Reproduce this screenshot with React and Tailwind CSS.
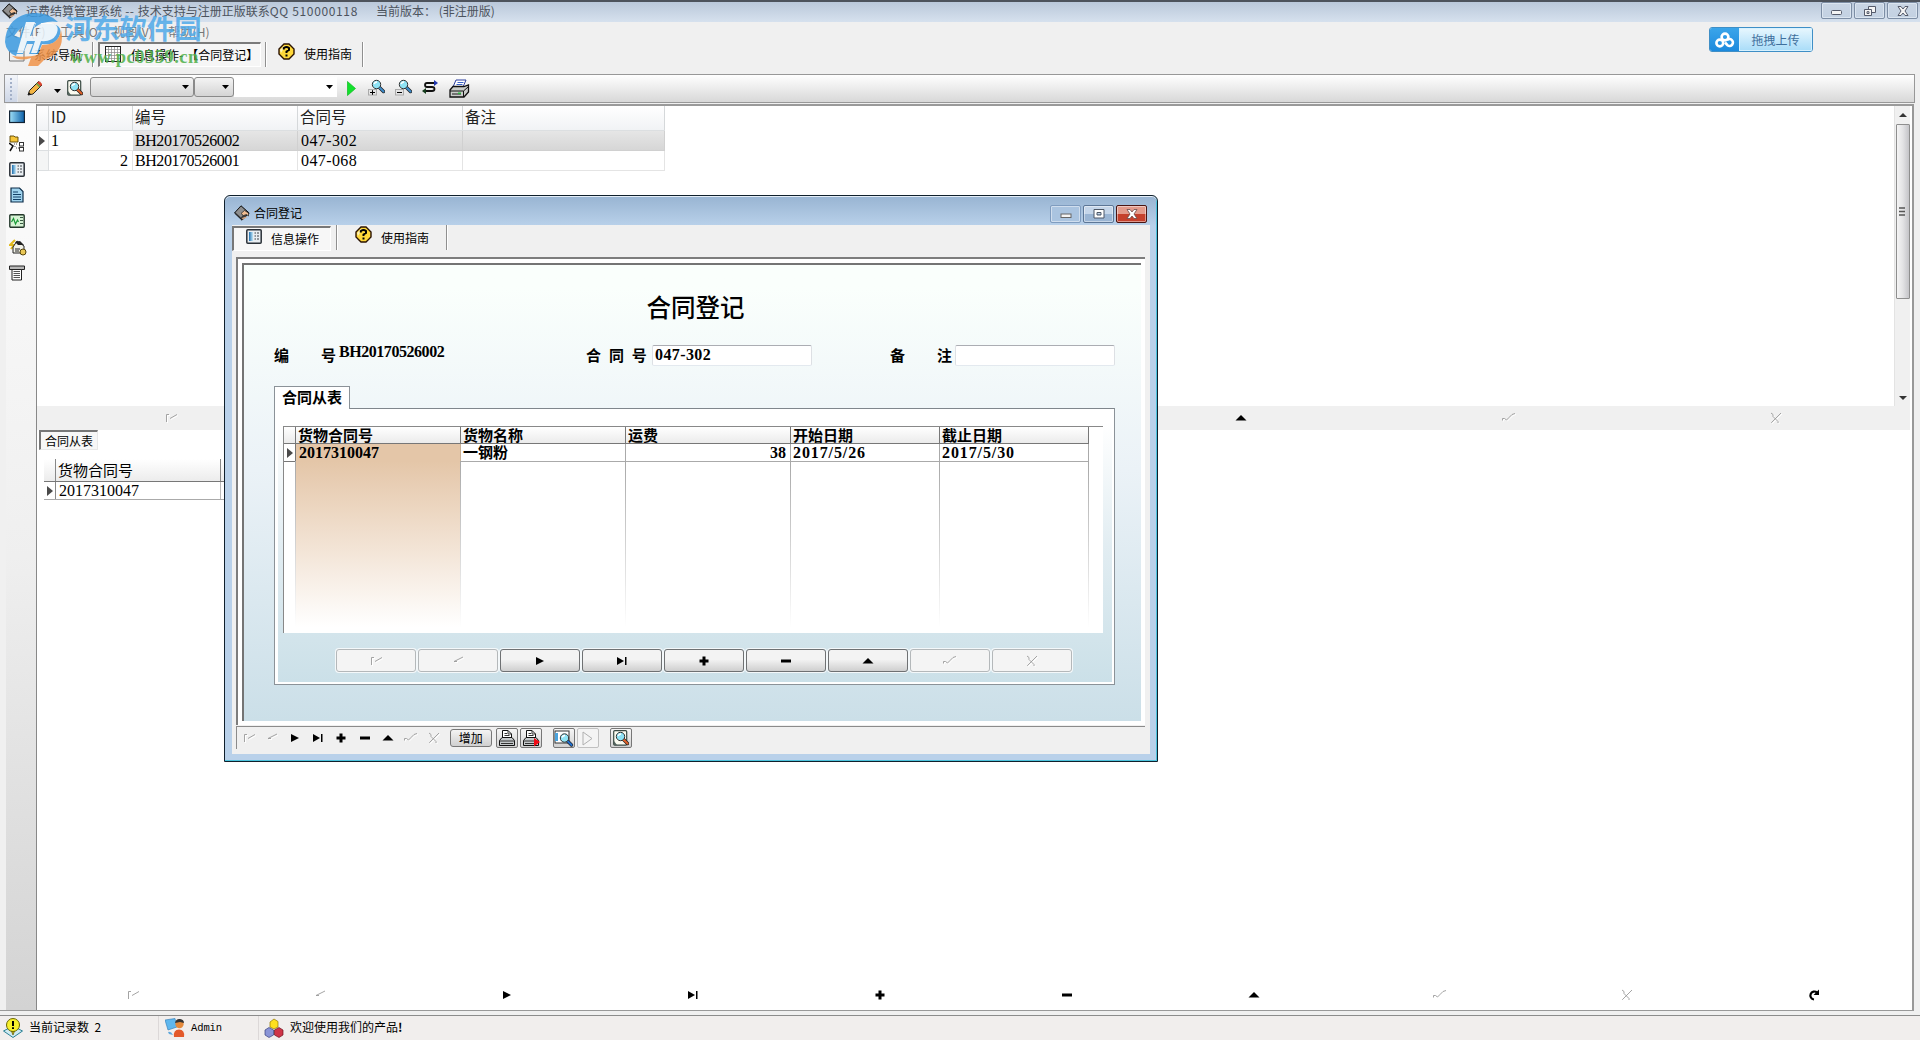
import React from "react";

const sans = "font-['Noto_Sans_CJK_SC',sans-serif]";
const serif = "font-['Liberation_Serif','Noto_Sans_CJK_SC',serif]";

function Nav({ kind, off }) {
  const c = off ? "#9a9a9a" : "#000";
  const disabled = {
    first: "M3.5 12V4.5H6M7 8.5L14 4.5",
    prev: "M4 8.5L13 4M4 8.5H7",
    check: "M1.5 10.5V8.5H3.5L5.5 10L8 7.5L11 4.500L14 3.5",
    cancel: "M3 3L5 4.500V6.500L10 11.500V13M13 3L8 8L3.500 12.500V13",
  };
  return (
    <svg width="16" height="16" viewBox="0 0 16 16" className="shrink-0">
      {disabled[kind] && (
        <>
          <path d={disabled[kind]} transform="translate(1 1)" fill="none" stroke="#fff" strokeWidth="1" />
          <path d={disabled[kind]} fill="none" stroke={c} strokeWidth="0.9" />
        </>
      )}
      {kind === "next" && <path d="M4 4L12 8L4 12Z" fill={c} />}
      {kind === "last" && <path d="M3 4L10 8L3 12ZM11 4H12.500V12H11Z" fill={c} />}
      {kind === "plus" && <path d="M6.5 3.5H9.5V6.5H12.5V9.5H9.5V12.5H6.5V9.5H3.5V6.5H6.5Z" fill={c} />}
      {kind === "minus" && <path d="M3 6.5H13V9.5H3Z" fill={c} />}
      {kind === "up" && <path d="M8 5L13.5 10.5H2.5Z" fill={c} />}
      {kind === "refresh" && (
        <>
          <path d="M11 5.5A4 4 0 1 0 8 12.500" fill="none" stroke={c} strokeWidth="2.200" />
          <path d="M7.500 8H13V2.5Z" fill={c} />
        </>
      )}
    </svg>
  );
}

function AppIcon() {
  return (
    <svg width="16" height="16" viewBox="0 0 16 16" className="shrink-0">
      <path d="M0.500 8L7 0.8L15.200 8L8 15.2Z" fill="#3c3c3c" stroke="#111" />
      <path d="M1.500 7.500L7 1.500L12 6L7 12.500Z" fill="#8f8f8f" />
      <path d="M7 8.500L10.500 5.500L14.500 8V11L12.500 9.500L9.500 10.500Z" fill="#f0bd92" stroke="#222" strokeWidth="0.7" />
      <path d="M8 13L12 11.500L12.500 12.500L8.500 14.500Z" fill="#d8a57e" />
    </svg>
  );
}

function HelpIcon() {
  return (
    <svg width="17" height="17" viewBox="0 0 17 17" className="shrink-0">
      <path d="M6 1H11L16 6V11L11 16H6L1 11V6Z" fill="#ffd83a" stroke="#2a1200" strokeWidth="1.4" />
      <path d="M6 3H10L6 5L3 10L2 7Z" fill="#fff3b8" />
      <path d="M5.8 6.5V5Q8.5 3 11 5V7L8.5 8.5V10M8.5 11.6V13.4" fill="none" stroke="#000" strokeWidth="2" />
    </svg>
  );
}

function FormIcon() {
  return (
    <svg width="16" height="15" viewBox="0 0 16 15" className="shrink-0">
      <defs>
        <linearGradient id="formPane" x1="0" x2="1">
          <stop offset="0" stopColor="#1f6fae" />
          <stop offset="1" stopColor="#c4e8f8" />
        </linearGradient>
      </defs>
      <rect x="0.8" y="0.8" width="14.4" height="13.4" rx="1" fill="#e9eef2" stroke="#2b3138" strokeWidth="1.5" />
      <rect x="3" y="3" width="4" height="9" fill="url(#formPane)" />
      <path d="M8.5 4H10M11 4H13M8.5 7H10M11 7H13M8.5 10H10M11 10H13" stroke="#3a4046" />
    </svg>
  );
}

function Lens({ x = 0, y = 0, handle = "#2f7fd0" }) {
  return (
    <g transform={`translate(${x} ${y})`}>
      <path d="M8 8L12.500 12.500" stroke="#222" strokeWidth="3.4" strokeLinecap="round" />
      <path d="M8.5 8.5L12.500 12.500" stroke={handle} strokeWidth="2" strokeLinecap="round" />
      <circle cx="5.5" cy="5.5" r="4.2" fill="#8fe3f5" stroke="#333" strokeWidth="1" />
      <path d="M3 5Q4 3 6 3" stroke="#fff" strokeWidth="1.4" fill="none" />
    </g>
  );
}

function PreviewIcon() {
  return (
    <svg width="16" height="16" viewBox="0 0 16 16" className="shrink-0">
      <rect x="0.7" y="0.7" width="13" height="14.4" rx="1" fill="#fbfbf0" stroke="#3a4a44" strokeWidth="1.2" />
      <path d="M1 11L4 15H1Z" fill="#52635c" />
      <Lens x={2} y={1} handle="#e2622a" />
    </svg>
  );
}

function ZoomIcon({ plus }) {
  return (
    <svg width="17" height="17" viewBox="0 0 17 17" className="shrink-0">
      <rect x="0.5" y="10.5" width="8" height="5.500" fill="#e4e4e4" stroke="#aaa" />
      <path d={plus ? "M2 13.5H7M4.5 11.2V15.8" : "M2 13.5H7"} stroke="#000" />
      <Lens x={3} y={0} handle="#3b8ccc" />
    </svg>
  );
}

function PrinterIcon({ arrow }) {
  return (
    <svg width="18" height="18" viewBox="0 0 18 18" className="shrink-0">
      <path d="M4.5 9V1.5H10L13.5 5V9" fill="#fff" stroke="#111" />
      <path d="M10 1.500V5H13.500M6.5 4.5H9M6.5 6.5H11.5" fill="none" stroke="#333" />
      <path d="M1.5 11.5L4 8.5H14L16.5 11.5V16.5H1.5Z" fill="#c4c8ca" stroke="#111" />
      <path d="M1.5 12H16.5M3 14.5H15" stroke="#333" />
      {arrow && <path d="M12 9L18 13L12 17.5Z" fill="#f00a14" />}
    </svg>
  );
}

function Sep({ className }) {
  return <div className={`h-[25px] w-[2px] border-r border-white bg-[#8f8f8f] ${className}`} />;
}

function TitleBar() {
  return (
    <header className="flex h-[22px] shrink-0 items-center border-t-2 border-[#4d535c] bg-linear-to-b from-[#bac8da] to-[#d6e1ee] pl-[2px]">
      <div className="-mt-[2px]"><AppIcon /></div>
      <span className={`-mt-[2px] ml-[8px] whitespace-pre text-[12px] leading-none text-[#4c535d] ${sans}`}>
        <span className="inline-block w-[350px]">运费结算管理系统<span className="tracking-[0.500px]"> -- </span>技术支持与注册正版联系<span className="tracking-[0.650px]">QQ 510000118</span></span>
        <span>当前版本： (非注册版)</span>
      </span>
      <div className="ml-auto mr-[2px] flex gap-[2px] self-start">
        {["min", "restore", "close"].map((k) => (
          <div key={k} className="flex h-[17px] w-[31px] items-center justify-center rounded-[2px] border border-[#7d8ea5] bg-linear-to-b from-[#c9d5e4] to-[#c3d1e2] shadow-[inset_0_0_0_1px_#dbe5f0]">
            <svg width="14" height="12" viewBox="0 0 14 12">
              {k === "min" && <rect x="1.5" y="5.5" width="10" height="4" rx="1" fill="#f4f4f4" stroke="#555b6b" />}
              {k === "restore" && (
                <g fill="#f4f4f4" stroke="#555b6b">
                  <path d="M5.5 1.5H12.5V7.5H5.5Z" />
                  <path d="M1.5 4.5H8.5V10.5H1.5Z" />
                  <path d="M4 6.7H6V8.5H4Z" />
                </g>
              )}
              {k === "close" && (
                <path d="M2 1.5H5L7 4L9 1.5H12L9 6L12 10.5H9L7 8L5 10.5H2L5 6Z" fill="#f4f4f4" stroke="#555b6b" />
              )}
            </svg>
          </div>
        ))}
      </div>
    </header>
  );
}

function MenuBar() {
  return (
    <nav className={`flex h-[20px] shrink-0 items-center pb-px pl-[6px] text-[12px] leading-none text-[#777] ${sans}`}>
      <span className="w-[54px] tracking-[0.2px]">文件(F)</span>
      <span className="w-[53px] tracking-[0.2px]">工具(O)</span>
      <span className="w-[55px] tracking-[0.2px]">视图(V)</span>
      <span className="tracking-[0.2px]">帮助(H)</span>
    </nav>
  );
}

function MainTabs() {
  return (
    <div className={`flex h-[32px] shrink-0 items-start text-[12px] leading-none text-black ${sans}`}>
      <div className="flex h-[25px] w-[92px] items-center pl-[9px]">
        <svg width="16" height="14" viewBox="0 0 16 14">
          <path d="M0.5 13V3H15V13Z" fill="#eee" stroke="#777" />
        </svg>
        <span className="ml-[9px]">系统导航</span>
      </div>
      <Sep />
      <div className="ml-[4px] flex h-[25px] w-[163px] items-center border-t-2 border-l-2 border-[#7b7b7b] border-r border-b border-r-white border-b-white bg-[#f6f6f6] pl-[5px]">
        <svg width="16" height="16" viewBox="0 0 16 16" className="-mt-[2px] shrink-0">
          <rect x="0.5" y="0.5" width="15" height="15" fill="#fff" stroke="#222" />
          <path d="M3.5 1V15M6.5 1V15M9.5 1V15M12.5 1V15M1 3.5H15M1 6.5H15M1 9.5H15M1 12.5H15" stroke="#888" strokeWidth="0.7" />
        </svg>
        <span className="ml-[10px] whitespace-nowrap">信息操作<span className="tracking-[3px]">-</span>【合同登记】</span>
      </div>
      <Sep className="ml-[4px]" />
      <div className="flex h-[24px] w-[95px] items-center pl-[11px]">
        <div className="-mt-[5px]"><HelpIcon /></div>
        <span className="ml-[9px]">使用指南</span>
      </div>
      <Sep />
    </div>
  );
}

function Arrow() {
  return (
    <svg width="7" height="4" viewBox="0 0 7 4" className="shrink-0">
      <path d="M0 0H7L3.5 4Z" fill="#000" />
    </svg>
  );
}

function Toolbar() {
  return (
    <div className="ml-[4px] mr-[5px] flex h-[29px] shrink-0 items-center border border-[#989898] bg-linear-to-b from-white to-[#d8d8d8]">
      <div className="h-full w-[13px] border-r border-[#e2e6ee] bg-linear-to-b from-[#f4f6fa] to-[#cdd6e6] pt-[2px] pl-[4px]">
        <div className="h-[24px] w-[5px] bg-[radial-gradient(#a3b0c8_1px,transparent_1.4px)] bg-[length:4px_4px]" />
      </div>
      <svg width="17" height="17" viewBox="0 0 17 17" className="ml-[9px]">
        <path d="M1 15L2.5 10.5L11.5 1.5L15 5L6 14L1 15Z" fill="#f3b544" stroke="#222" />
        <path d="M10 3L11.5 1.5H13L15 4V5L13.5 6.5Z" fill="#d8452e" />
        <path d="M9 4L10 3L13.5 6.5L12.5 7.5Z" fill="#5fa54a" />
        <path d="M1 15L2 12.2L4 14.2Z" fill="#111" />
      </svg>
      <div className="mt-[4px] ml-[10px]"><Arrow /></div>
      <div className="-mt-[2px] ml-[6px]"><PreviewIcon /></div>
      <div className="-mt-[4px] ml-[7px] flex h-[20px] w-[104px] items-center justify-end rounded-[3px] border border-[#8a8a8a] bg-linear-to-b from-[#f4f4f4] to-[#d4d4d4] pr-[4px]"><Arrow /></div>
      <div className="-mt-[4px] flex h-[20px] w-[40px] items-center justify-end rounded-[3px] border border-[#8a8a8a] bg-linear-to-b from-[#f4f4f4] to-[#d4d4d4] pr-[4px]"><Arrow /></div>
      <div className="-mt-[4px] flex h-[20px] w-[103px] items-center justify-end bg-white pr-[4px]"><Arrow /></div>
      <svg width="9" height="15" viewBox="0 0 9 15" className="ml-[10px]">
        <path d="M0.5 0.5L8.5 7.5L0.5 14.5Z" fill="#12e02c" stroke="#0bbb20" strokeWidth="0.7" />
      </svg>
      <div className="-mt-[3px] ml-[12px]"><ZoomIcon plus /></div>
      <div className="-mt-[3px] ml-[10px]"><ZoomIcon /></div>
      <svg width="16" height="14" viewBox="0 0 16 14" className="-mt-[3px] ml-[10px]">
        <path d="M14 3H5Q3 3 3 5Q3 7 5 7H10Q12.500 7 12.500 9Q12.500 11 10 11H2" fill="none" stroke="#111" strokeWidth="1.800" />
        <path d="M12 0L16 3L12 6Z" fill="#2238b0" />
        <path d="M4 8L0 11L4 14Z" fill="#143c1c" />
      </svg>
      <svg width="21" height="19" viewBox="0 0 21 19" className="ml-[11px]">
        <path d="M7 1H17L14 8H4Z" fill="#fff" stroke="#2a3d9c" />
        <path d="M8.500 3.500H14.500M7.500 5.500H13.500" stroke="#3a63c8" />
        <path d="M1 11L4 7.500H15L19.500 6V13L15 18H1Z" fill="#c9ccc9" stroke="#111" strokeWidth="1.300" />
        <path d="M1 12H14.500L19 8M14.500 12V18" fill="none" stroke="#111" />
        <path d="M3 15H12" stroke="#555" strokeWidth="1.500" />
        <path d="M9 13.500H12V15H9Z" fill="#28b43c" />
      </svg>
    </div>
  );
}

function Sidebar() {
  return (
    <aside className="ml-[6px] flex w-[30px] shrink-0 flex-col items-center gap-[10px] bg-linear-to-b from-[#fdfdfd] via-[#efefef] to-[#d3d3d3] pt-[5px] pr-[8px]">
      <svg width="16" height="16" viewBox="0 0 16 16">
        <defs>
          <linearGradient id="blueTile" x1="0" x2="1">
            <stop offset="0" stopColor="#9fe0f8" />
            <stop offset="1" stopColor="#0b5fa8" />
          </linearGradient>
        </defs>
        <rect x="0.600" y="2" width="14.800" height="11.500" fill="url(#blueTile)" stroke="#123" strokeWidth="1.200" />
      </svg>
      <svg width="16" height="17" viewBox="0 0 16 17">
        <path d="M1 1H5L6 2H9V7H1Z" fill="#f6c63a" stroke="#5a4300" strokeWidth="0.900" />
        <path d="M0 8L4 11L1 16" fill="none" stroke="#111" strokeWidth="1.500" />
        <path d="M5 9H9M7 13H10M6 11V12" stroke="#555" strokeDasharray="1 1" />
        <rect x="10.500" y="7.500" width="4" height="3.500" fill="#fff" stroke="#333" />
        <rect x="10.500" y="12.500" width="4" height="3.500" fill="#fff" stroke="#333" />
      </svg>
      <FormIcon />
      <svg width="16" height="16" viewBox="0 0 16 16">
        <path d="M2 1H10.500L14 4.500V15H2Z" fill="#9fd3ee" stroke="#0c2c48" strokeWidth="1.200" />
        <path d="M4 5H9M4 7.500H12M4 10H12M4 12.500H12" stroke="#123f66" />
      </svg>
      <svg width="16" height="16" viewBox="0 0 16 16">
        <rect x="0.800" y="1.800" width="14.400" height="12.400" rx="1" fill="#d6f3d4" stroke="#23372a" strokeWidth="1.400" />
        <path d="M2.500 9L4.500 5.500L6.500 11L8.500 7L9.500 9" fill="none" stroke="#189a36" strokeWidth="1.200" />
        <path d="M11 4.500H14M11 7.500H14M11 10.500H14" stroke="#3a5a44" />
      </svg>
      <svg width="18" height="17" viewBox="0 0 18 17" className="-mb-px ml-[2px]">
        <path d="M6 1L1 6H5L2 10" fill="none" stroke="#e2ba1c" strokeWidth="2" />
        <path d="M8 2L15 7V14H4V8Z" fill="#f2f2e8" stroke="#222" />
        <path d="M6 3L11 2L15 6H9Z" fill="#222" />
        <path d="M6 10H11M6 12H10" stroke="#222" />
        <circle cx="14" cy="13" r="3" fill="#e9c755" stroke="#54430c" />
      </svg>
      <svg width="16" height="16" viewBox="0 0 16 16">
        <path d="M0.500 1H15.500V4.500H0.500Z" fill="#b9b9b9" stroke="#222" />
        <path d="M3 4.500H12.500V15H3Z" fill="#fff" stroke="#222" />
        <path d="M4.500 6.500H11M4.500 8.500H11M4.500 10.500H11M4.500 12.500H11" stroke="#555" />
      </svg>
    </aside>
  );
}

function RowMark() {
  return (
    <svg width="6" height="10" viewBox="0 0 6 10">
      <path d="M0 0L6 5L0 10Z" fill="#4a4a4a" />
    </svg>
  );
}

function MasterGrid() {
  const cols = "grid grid-cols-[12px_84px_165px_165px_202px]";
  return (
    <div className={`w-[628px] text-[16px] leading-none text-black ${serif}`}>
      <div className={`${cols} h-[25px] border-b border-[#dcdfe1] bg-linear-to-b from-white to-[#f1f3f5] text-[15.500px] text-[#222]`}>
        {["", "ID", "编号", "合同号", "备注"].map((t) => (
          <div key={t} className={`flex items-center border-r border-[#d5d8da] pb-[2px] pl-[2px] ${sans}`}>{t}</div>
        ))}
      </div>
      <div className={`${cols} h-[20px]`}>
        <div className="flex items-center border-r border-b border-[#dcdfe1] pl-[2px]"><RowMark /></div>
        <div className="flex items-center border-b border-[#e8e8e8] pl-[2px]">1</div>
        <div className="flex items-center border-r border-b border-[#d0d0d0] bg-linear-to-b from-[#e6e6e6] to-[#d6d6d6] pl-[2px] tracking-[-0.450px]">BH20170526002</div>
        <div className="flex items-center border-r border-b border-[#d0d0d0] bg-linear-to-b from-[#e6e6e6] to-[#d6d6d6] pl-[3px] tracking-[0.400px]">047-302</div>
        <div className="border-r border-b border-[#d0d0d0] bg-linear-to-b from-[#e6e6e6] to-[#d6d6d6]" />
      </div>
      <div className={`${cols} h-[20px]`}>
        <div className="border-r border-b border-[#dcdfe1] bg-[#f4f5f5]" />
        <div className="flex items-center justify-end border-r border-b border-[#e4e4e4] pr-[4px]">2</div>
        <div className="flex items-center border-r border-b border-[#e4e4e4] pl-[2px] tracking-[-0.450px]">BH20170526001</div>
        <div className="flex items-center border-r border-b border-[#e4e4e4] pl-[3px] tracking-[0.400px]">047-068</div>
        <div className="border-r border-b border-[#e4e4e4]" />
      </div>
    </div>
  );
}

function ScrollBar() {
  return (
    <div className="mr-[2px] flex w-[16px] shrink-0 flex-col items-center border-l border-[#e3e3e3] bg-[#f0f0f0]">
      <div className="flex h-[18px] items-center">
        <svg width="8" height="4" viewBox="0 0 8 4"><path d="M4 0L8 4H0Z" fill="#333" /></svg>
      </div>
      <div className="flex h-[175px] w-[14px] items-center justify-center rounded-[1px] border border-[#8e8e8e] bg-linear-to-r from-[#f5f5f5] via-[#e2e2e4] to-[#c4c4c8]">
        <svg width="7" height="9" viewBox="0 0 7 9"><path d="M0 1H6M0 4.500H6M0 8H6" stroke="#555" strokeWidth="1.500" /></svg>
      </div>
      <div className="mt-auto flex h-[17px] items-center">
        <svg width="8" height="4" viewBox="0 0 8 4"><path d="M0 0H8L4 4Z" fill="#333" /></svg>
      </div>
    </div>
  );
}

const masterNav = [["first", 1], ["prev", 1], ["next"], ["last"], ["up"], ["check", 1], ["cancel", 1]];
const detailNav = [["first", 1], ["prev", 1], ["next"], ["last"], ["plus"], ["minus"], ["up"], ["check", 1], ["cancel", 1]];

function Workspace() {
  return (
    <main className="flex min-w-0 flex-1 flex-col border-l border-[#888] bg-white">
      <div className="flex h-[302px] shrink-0 border-t-2 border-[#9a9a9a]">
        <MasterGrid />
        <div className="flex-1" />
        <ScrollBar />
      </div>
      <div className="mr-[2px] flex h-[24px] shrink-0 items-center bg-[#f0f0f0]">
        {masterNav.map(([k, off]) => (
          <div key={k} className="flex flex-1 justify-center pb-px"><Nav kind={k} off={off} /></div>
        ))}
      </div>
      <div className={`ml-[2px] flex h-[20px] w-[59px] shrink-0 items-center border-t-2 border-l-2 border-[#777] border-r border-b border-r-[#e8e8e8] border-b-[#e8e8e8] bg-[#f7f7f7] pl-[4px] text-[12px] leading-none ${sans}`}>
        <span className="whitespace-nowrap">合同从表</span>
      </div>
      <div className={`mt-[9px] ml-[7px] w-[360px] leading-none text-black ${serif}`}>
        <div className="grid h-[23px] grid-cols-[12px_165px_1fr] border-b border-[#777] bg-linear-to-b from-white to-[#ececec] text-[15px]">
          <div className="border-r border-[#888]" />
          <div className={`flex items-center border-r border-[#888] pb-[2px] pl-[2px] ${sans}`}>货物合同号</div>
          <div />
        </div>
        <div className="grid h-[18px] grid-cols-[12px_165px_1fr] border-b border-[#aaa] text-[16px]">
          <div className="flex items-center border-r border-[#888] pl-[3px]"><RowMark /></div>
          <div className="flex items-center border-r border-[#bbb] pl-[3px]">2017310047</div>
          <div />
        </div>
      </div>
      <div className="mt-auto mb-[6px] flex h-[18px] items-center pr-[5px] pl-[3px]">
        {[...detailNav, ["refresh"]].map(([k, off]) => (
          <div key={k} className="flex flex-1 justify-center"><Nav kind={k} off={off} /></div>
        ))}
      </div>
    </main>
  );
}

function StatusBar() {
  return (
    <footer className={`mt-[4px] flex h-[25px] shrink-0 items-center border-t border-[#8c8c8c] bg-[#f1eeed] text-[12px] leading-none text-black ${sans}`}>
      <div className="flex h-full w-[159px] items-center border-r border-[#dcd8d8] pl-[3px]">
        <svg width="20" height="20" viewBox="0 0 20 20">
          <path d="M0.500 13L10 8L19.500 13L10 19.500Z" fill="#cfeaf2" stroke="#2b8095" />
          <path d="M8 12H12L10 17Z" fill="#c9b91c" stroke="#5c5600" strokeWidth="0.700" />
          <circle cx="10" cy="7" r="6.500" fill="#f7f02c" stroke="#6a6500" />
          <path d="M10 3V8M10 9.300V11" stroke="#000" strokeWidth="2" />
        </svg>
        <span className="-mt-[2px] ml-[6px] whitespace-pre">当前记录数  2</span>
      </div>
      <div className="flex h-full w-[100px] items-center border-r border-[#dcd8d8] pl-[6px]">
        <svg width="20" height="20" viewBox="0 0 20 20">
          <path d="M0 2L10 0.500L12 9L3 12Z" fill="#5fb7ee" stroke="#2c78b5" strokeWidth="0.600" />
          <circle cx="14.500" cy="6" r="4.200" fill="#e58a3c" />
          <path d="M10 5Q11 0.500 15 1Q19 1.500 19 5L15 4Z" fill="#333" />
          <path d="M9 19Q8 11.500 14 11.500Q20 11.500 19 19Z" fill="#e3592a" />
          <path d="M3 14Q6 13 8 17L4 16Z" fill="#5fa8dc" />
        </svg>
        <span className="ml-[6px] font-['Liberation_Mono',monospace] text-[10.500px] tracking-[-0.100px]">Admin</span>
      </div>
      <div className="flex h-full items-center pl-[5px]">
        <svg width="20" height="20" viewBox="0 0 20 20">
          <path d="M6 4L10 1L14 3.500V9L10 11L6 9Z" fill="#ffdf1f" stroke="#8f7600" strokeWidth="0.700" />
          <path d="M1 12L5 9.500L9.500 12V17L5 19.500L1 17Z" fill="#8a94d6" stroke="#38407c" strokeWidth="0.700" />
          <path d="M10.500 12L15 9.500L19 12V17L15 19.500L10.500 17Z" fill="#cf3448" stroke="#6e1320" strokeWidth="0.700" />
        </svg>
        <span className="-mt-[2px] ml-[6px]">欢迎使用我们的产品<span className="font-bold">!</span></span>
      </div>
    </footer>
  );
}

function DialogGrid() {
  const cols = "grid grid-cols-[12px_165px_165px_165px_149px_149px]";
  const heads = ["", "货物合同号", "货物名称", "运费", "开始日期", "截止日期"];
  return (
    <div className="flex h-[207px] w-[820px] flex-col border-t border-l border-[#888] bg-white leading-none">
      <div className={`${cols} h-[17px] w-[805px] shrink-0 border-b border-[#777] bg-linear-to-b from-white to-[#ebebeb] text-[15px] font-bold ${sans}`}>
        {heads.map((h) => (
          <div key={h} className="flex h-[16px] items-center whitespace-nowrap border-r border-[#777] pb-[2px] pl-[2px]">{h}</div>
        ))}
      </div>
      <div className={`${cols} h-[17px] w-[805px] shrink-0 text-[16px] font-bold ${serif}`}>
        <div className="flex items-center border-r border-b border-[#777] pl-[3px]"><RowMark /></div>
        <div className="flex items-center border-r border-b border-[#c9b096] bg-[#e4c6a8] pl-[3px]">2017310047</div>
        <div className={`flex items-center border-r border-b border-[#aaa] pb-[2px] pl-[2px] text-[15px] ${sans}`}>一钢粉</div>
        <div className="flex items-center justify-end border-r border-b border-[#aaa] pr-[4px]">38</div>
        <div className="flex items-center border-r border-b border-[#aaa] pl-[2px] tracking-[0.900px]">2017/5/26</div>
        <div className="flex items-center border-r border-b border-[#aaa] pl-[2px] tracking-[0.900px]">2017/5/30</div>
      </div>
      <div className={`${cols} h-[166px] w-[805px]`}>
        {["", "bg-linear-to-b from-[#e4c6a8] to-white", "", "", "", ""].map((bg, i) => (
          <div key={i} className={`flex justify-end ${bg}`}>
            <div className="w-px bg-linear-to-b from-[#a8a8a8] to-white" />
          </div>
        ))}
      </div>
    </div>
  );
}

function DialogHeader() {
  const box = "flex h-[18px] w-[31px] items-center justify-center rounded-[2px] border shadow-[inset_0_0_0_1px_rgba(255,255,255,0.45)]";
  return (
    <div className="flex h-[29px] shrink-0 items-center pr-[10px] pl-[9px]">
      <div className="mt-[4px]"><AppIcon /></div>
      <span className={`mt-[4px] ml-[4px] text-[12px] leading-none text-black ${sans}`}>合同登记</span>
      <div className="mt-[6px] ml-auto flex gap-[2px]">
        <div className={`${box} border-[#7f9cbf] bg-[#aac4e0]`}>
          <svg width="12" height="10" viewBox="0 0 12 10"><rect x="1" y="5" width="10" height="3.500" fill="#f4f4f4" stroke="#666" /></svg>
        </div>
        <div className={`${box} border-[#5c7696] bg-linear-to-b from-[#c5d6ea] from-50% to-[#9ab5d4] to-50%`}>
          <svg width="12" height="10" viewBox="0 0 12 10"><path d="M1 0.500H11V9H1ZM4 3.500V6H8V3.500Z" fill="#fff" fillRule="evenodd" stroke="#4d5766" /></svg>
        </div>
        <div className={`${box} border-[#4a1512] bg-linear-to-b from-[#e39a8b] from-50% to-[#c5402c] to-50%`}>
          <svg width="12" height="10" viewBox="0 0 12 10"><path d="M1 0.500H4L6 3L8 0.500H11L8 5L11 9.500H8L6 7L4 9.500H1L4 5Z" fill="#fff" stroke="#6a4a4a" strokeWidth="0.800" /></svg>
        </div>
      </div>
    </div>
  );
}

function Field({ children, className }) {
  return (
    <div className={`flex h-[21px] w-[160px] shrink-0 items-center rounded-[2px] border border-t-[#abadb3] border-r-[#dde0e4] border-b-[#e3e9ef] border-l-[#dde0e4] bg-white pl-[2px] ${className}`}>
      {children}
    </div>
  );
}

function Dialog() {
  const tool = "flex h-[20px] w-[22px] shrink-0 items-center justify-center rounded-[2px] border border-[#777] bg-linear-to-b from-[#f6f6f6] to-[#d2d2d2]";
  const bold = `text-[16px] font-bold leading-none ${serif}`;
  return (
    <section className="absolute top-[195px] left-[224px] flex h-[567px] w-[934px] flex-col rounded-t-[6px] border border-[#10202c] bg-linear-to-b from-[#98b4d2] to-[#b9d1ea] to-[30px] px-[7px] pb-[7px] shadow-[inset_0_1px_0_#e4eef8,inset_-1px_-1px_0_#4cc3dd]">
      <div className="-mx-[7px]"><DialogHeader /></div>
      <div className="flex flex-1 flex-col bg-[#f0f0f0]">
        <div className={`flex h-[32px] shrink-0 items-start text-[12px] leading-none ${sans}`}>
          <div className="mt-px flex h-[25px] w-[99px] items-center border-t-2 border-l-2 border-[#777] border-r border-b border-r-white border-b-white bg-[#f7f7f7] pl-[12px]">
            <div className="-mt-[5px]"><FormIcon /></div>
            <span className="ml-[9px]">信息操作</span>
          </div>
          <Sep className="ml-[5px]" />
          <div className="flex h-[26px] w-[108px] items-center pl-[17px]">
            <div className="-mt-[7px]"><HelpIcon /></div>
            <span className="ml-[9px]">使用指南</span>
          </div>
          <Sep />
        </div>
        <div className="mr-[5px] ml-[4px] flex h-[468px] shrink-0 flex-col border-t-2 border-l-2 border-[#7d7d7d] bg-white pt-[4px] pr-[4px] pl-[4px]">
          <div className="flex h-[458px] flex-col border-t-2 border-l-2 border-[#747474] bg-linear-to-b from-[#fafffc] from-5% via-[#ebf2f7] via-45% to-[#cbdfe8]">
            <div className={`mt-[28px] flex h-[28px] items-center justify-center pl-[6px] text-[24.500px] font-medium leading-none text-black ${sans}`}>合同登记</div>
            <div className={`mt-[22px] ml-[30px] flex h-[24px] items-center text-[15px] font-bold leading-none text-black ${sans}`}>
              <span className="-mt-px w-[47px]">编</span>
              <span className="-mt-px w-[18px]">号</span>
              <span className={`-mt-[6px] w-[247px] tracking-[-0.450px] ${bold}`}>BH20170526002</span>
              <span className="-mt-px w-[66px] whitespace-nowrap [word-spacing:4.500px]">合 同 号</span>
              <Field><span className={`tracking-[0.400px] ${bold}`}>047-302</span></Field>
              <span className="-mt-px ml-[78px] w-[47px]">备</span>
              <span className="-mt-px w-[18px]">注</span>
              <Field />
            </div>
            <div className="mt-[19px] ml-[30px] flex w-[841px] flex-col">
              <div className={`z-10 -mb-px flex h-[23px] w-[76px] items-center justify-center border border-b-0 border-[#8b9298] bg-white pb-[3px] text-[15px] font-bold leading-none text-black ${sans}`}>合同从表</div>
              <div className="flex h-[277px] flex-col border border-[#8b9298] border-t-[#7f868c] bg-white pr-[2px] pb-[2px] pl-[3px]">
                <div className="flex flex-1 flex-col bg-linear-to-b from-white from-5% via-[#e2edf2] via-50% to-[#cbe0e8] pt-[17px] pl-[5px]">
                  <DialogGrid />
                  <div className="mt-[16px] ml-[53px] flex gap-[2px]">
                    {detailNav.map(([k, off]) => (
                      <div key={k} className={`flex h-[23px] w-[80px] items-center justify-center rounded-[3px] border shadow-[0_0_0_1px_#f4f8fa] ${off ? "border-[#b4b8ba] bg-[#f4f4f4]" : "border-[#6f7173] bg-linear-to-b from-[#f3f3f3] from-45% to-[#cfcfcf]"}`}>
                        <Nav kind={k} off={off} />
                      </div>
                    ))}
                  </div>
                </div>
              </div>
            </div>
          </div>
        </div>
        <div className="mt-px mr-[5px] ml-[4px] flex h-[23px] items-center border-t border-l border-[#8b8b8b]">
          {detailNav.map(([k, off]) => (
            <div key={k} className="flex w-[23.200px] shrink-0 justify-center"><Nav kind={k} off={off} /></div>
          ))}
          <div className={`ml-[4px] flex h-[18px] w-[42px] items-center justify-center rounded-[3px] border border-[#777] bg-linear-to-b from-[#f4f4f4] to-[#d0d0d0] text-[12px] leading-none ${sans}`}>增加</div>
          <div className={`ml-[4px] ${tool}`}><PrinterIcon /></div>
          <div className={`ml-[2px] ${tool}`}><PrinterIcon arrow /></div>
          <div className={`ml-[11px] ${tool}`}>
            <svg width="20" height="19" viewBox="0 0 20 19">
              <rect x="1" y="2" width="14" height="12" fill="#fff" stroke="#333" />
              <path d="M2.500 4V12" stroke="#4aa3dd" strokeWidth="3" />
              <Lens x={5} y={3.500} handle="#1f6fd0" />
            </svg>
          </div>
          <div className="ml-[2px] flex h-[20px] w-[22px] items-center justify-center rounded-[2px] border border-[#c0c0c0] bg-[#f4f4f4]">
            <svg width="11" height="15" viewBox="0 0 11 15"><path d="M1 1V14L10 7.500Z" fill="none" stroke="#b0b0b0" /></svg>
          </div>
          <div className={`ml-[11px] ${tool}`}><PreviewIcon /></div>
        </div>
      </div>
    </section>
  );
}

function UploadBadge() {
  return (
    <div className={`absolute top-[27px] left-[1709px] flex h-[25px] w-[104px] overflow-hidden rounded-[3px] border border-[#3f8fc6] text-[12px] leading-none text-[#3f6f9c] ${sans}`}>
      <div className="flex w-[29px] items-center justify-center bg-linear-to-b from-[#3aa5ea] to-[#1c8add]">
        <svg width="20" height="16" viewBox="0 0 20 16" fill="none" stroke="#fff" strokeWidth="2.600">
          <circle cx="10" cy="5" r="3.400" />
          <circle cx="4.800" cy="11" r="3.400" />
          <path d="M12 8.200A3.400 3.400 0 1 1 12.500 13.200L10 10.500" />
        </svg>
      </div>
      <div className="flex flex-1 items-center justify-center bg-linear-to-b from-[#e8f7fe] to-[#a8dcf8] shadow-[inset_0_0_0_1px_#d8f2ff]">拖拽上传</div>
    </div>
  );
}

function Watermark() {
  return (
    <div className="absolute top-[12px] left-[4px] h-[56px] w-[200px] opacity-85">
      <svg width="60" height="56" viewBox="0 0 60 56" className="absolute top-0 left-0">
        <path d="M1 30Q2 8 22 2Q42 -2 54 10Q40 8 30 16L32 11Q18 12 10 24L18 26L12 44Q2 40 1 30Z" fill="#3b9ae0" />
        <path d="M20 12H31L27 25H33L37 12H48Q60 14 55 25Q50 34 38 32L34 42H25L29 32H23L19 42H11Z" fill="#3b9ae0" />
        <path d="M22 10H31L26 24H33L37 11H47Q57 13 52 23Q48 30 37 29L33 41H27L31 29H23L19 41H13Z" fill="#fff" fillOpacity="0.900" />
        <path d="M34 43L38 33Q55 33 57 18Q62 40 40 48L34 54H24L27 46Q15 50 8 44Q22 46 34 43Z" fill="#f0944a" />
      </svg>
      <div className={`absolute top-[2px] left-[61px] whitespace-nowrap text-[27.300px] font-bold leading-none text-[#4fa9e8] ${sans}`}>河东软件园</div>
      <div className="absolute top-[36px] left-[66px] whitespace-nowrap font-['Liberation_Serif',serif] text-[18.500px] font-bold leading-none tracking-[0.500px] text-[#4fb04a]">www.pc0359.cn</div>
    </div>
  );
}

export default function App() {
  return (
    <div className="relative flex h-[1040px] w-[1920px] flex-col overflow-hidden bg-[#f0f0f0]">
      <TitleBar />
      <MenuBar />
      <MainTabs />
      <Toolbar />
      <div className="mt-[1px] mr-[6px] flex min-h-0 flex-1 border-r-2 border-b border-[#999]">
        <Sidebar />
        <Workspace />
      </div>
      <StatusBar />
      <Watermark />
      <UploadBadge />
      <Dialog />
    </div>
  );
}
